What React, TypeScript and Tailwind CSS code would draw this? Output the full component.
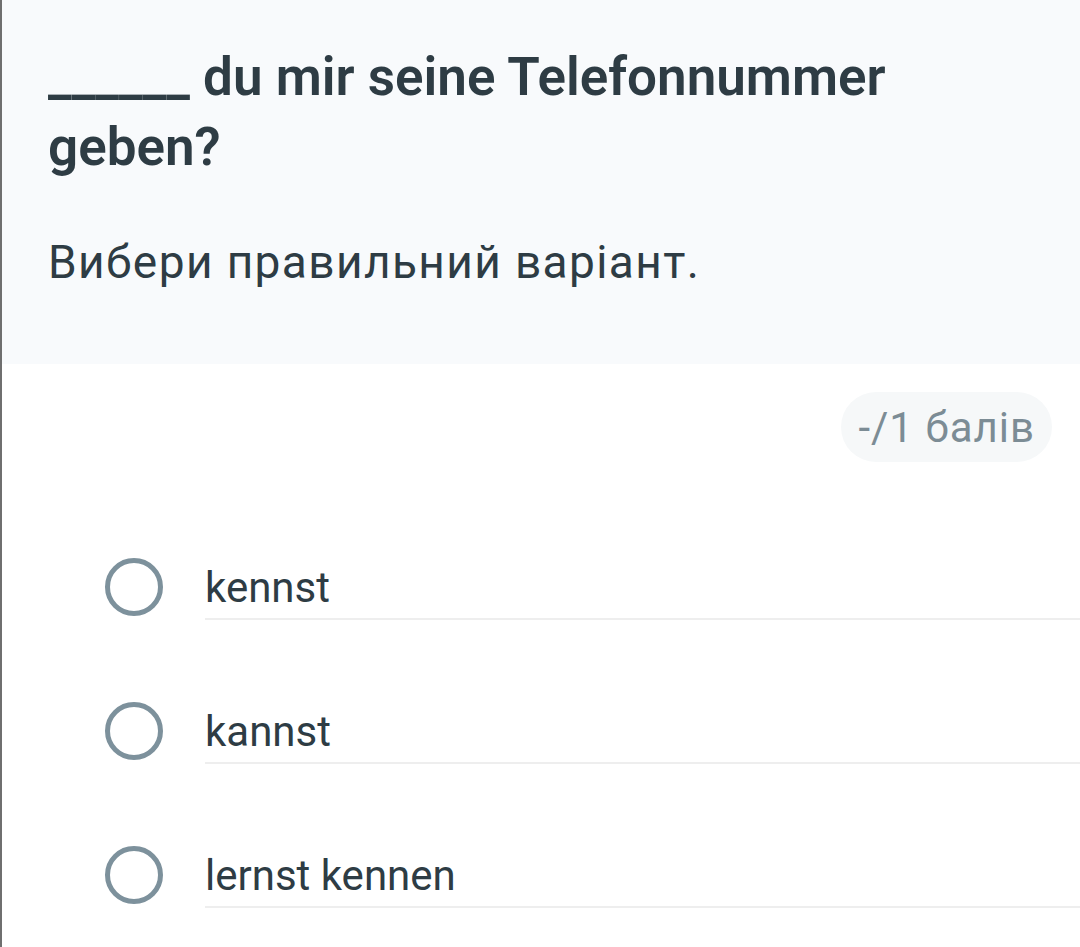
import React from 'react';

const options = ['kennst', 'kannst', 'lernst kennen'];

function Radio() {
  return (
    <span className="flex items-center justify-center w-[60px] h-[60px] shrink-0">
      <span className="block w-[58px] h-[58px] rounded-full border-[5px] border-[#7d919c]" />
    </span>
  );
}

export default function App() {
  return (
    <div
      className="w-[1080px] h-[947px] overflow-hidden bg-white border-l-2 border-[#6f6f6f] text-[#2e3c44]"
      style={{ fontFamily: 'Roboto, "Noto Sans", sans-serif' }}
    >
      {/* Question header */}
      <div className="bg-[#f8fafc] h-[364px] pl-[46px] pr-6 pt-[42px]">
        <h1 className="text-[53px] leading-[70px] font-semibold">
          ______ du mir seine Telefonnummer geben?
        </h1>
        <p className="mt-[52px] text-[46px] leading-[56px] font-normal tracking-[1.4px]">
          Вибери правильний варіант.
        </p>
      </div>

      {/* Points badge */}
      <div className="flex justify-end pr-[28px] pt-[28px]">
        <span className="px-[17px] h-[70px] flex items-center rounded-full bg-[#f6f8f9] text-[#7c8c95] text-[42px] tracking-[1px]">
          -/1 балів
        </span>
      </div>

      {/* Options */}
      <div className="mt-[95px] flex flex-col gap-[81px]">
        {options.map((o) => (
          <div key={o} className="flex items-start">
            <div className="w-[203px] flex justify-end pr-[41px]">
              <Radio />
            </div>
            <div className="flex-1 pt-[7px] border-b-2 border-[#eeeeee] pb-[6px]">
              <span className="block text-[42px] leading-[48px]">{o}</span>
            </div>
          </div>
        ))}
      </div>
    </div>
  );
}
